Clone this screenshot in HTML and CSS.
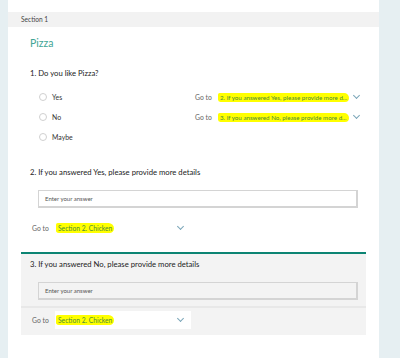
FILE: index.html
```html
<!DOCTYPE html>
<html lang="en">
<head>
  <meta charset="UTF-8">
  <title>Pizza</title>
  <link rel="stylesheet" href="styles.css">
</head>
<body>
  <div class="page">
    <div class="section-bar">Section 1</div>
    <div class="title">Pizza</div>

    <div class="question">1. Do you like Pizza?</div>
    <div class="options">
      <div class="option">
        <span class="radio"></span><span class="label">Yes</span>
        <span class="goto">Go to</span>
        <span class="mark long">2. If you answered Yes, please provide more d...</span>
        <span class="chev"></span>
      </div>
      <div class="option">
        <span class="radio"></span><span class="label">No</span>
        <span class="goto">Go to</span>
        <span class="mark long">3. If you answered No, please provide more d...</span>
        <span class="chev"></span>
      </div>
      <div class="option">
        <span class="radio"></span><span class="label">Maybe</span>
      </div>
    </div>

    <div class="question q2">2. If you answered Yes, please provide more details</div>
    <div class="answer">Enter your answer</div>
    <div class="goto-row">
      <span class="goto">Go to</span>
      <div class="dropdown">
        <span class="mark">Section 2. Chicken</span>
        <span class="chev"></span>
      </div>
    </div>

    <div class="card">
      <div class="question">3. If you answered No, please provide more details</div>
      <div class="answer">Enter your answer</div>
      <div class="card-foot">
        <span class="goto">Go to</span>
        <div class="dropdown white">
          <span class="mark">Section 2. Chicken</span>
          <span class="chev"></span>
        </div>
      </div>
    </div>
  </div>
</body>
</html>
```
FILE: styles.css
```css
body {
  margin: 0;
  background: #e6eff2;
  font-family: Lato, "Open Sans", sans-serif;
  color: #333;
}

.page {
  margin-left: 8px;
  width: 371px;
  height: 358px;
  background: #fff;
  overflow: hidden;
}

.section-bar {
  margin-top: 12px;
  height: 15px;
  line-height: 15px;
  background: #f2f2f2;
  padding-left: 13px;
  font-size: 6.6px;
  color: #444;
}

.title {
  margin-top: 6px;
  height: 20px;
  line-height: 20px;
  padding-left: 22px;
  font-size: 10.5px;
  color: #3fa595;
}

.question {
  margin-top: 10px;
  height: 20px;
  line-height: 20px;
  padding-left: 22px;
  font-size: 7.7px;
  color: #222;
}

.q2 {
  margin-top: 15px;
}

.options {
  margin-top: 4px;
}

.option {
  display: flex;
  align-items: center;
  height: 20px;
  padding-left: 31px;
  font-size: 6.9px;
}

.radio {
  width: 6px;
  height: 6px;
  border: 1px solid #d0d0d0;
  border-radius: 50%;
}

.label {
  margin-left: 5px;
  width: 143px;
  color: #333;
}

.goto {
  font-size: 6.8px;
  color: #666;
  width: 23px;
}

.mark {
  background: #ffff00;
  color: #4b8c3a;
  font-size: 6.7px;
  padding: 1px 2px;
  border-radius: 2px 6px 5px 3px;
  white-space: nowrap;
}

.long {
  font-size: 6.2px;
}

.chev {
  width: 4px;
  height: 4px;
  margin-left: 5px;
  margin-top: -3px;
  border-right: 1px solid #7aa6b8;
  border-bottom: 1px solid #7aa6b8;
  transform: rotate(45deg);
}

.answer {
  margin-top: 8px;
  margin-left: 30px;
  width: 311px;
  height: 15px;
  line-height: 15px;
  padding-left: 6px;
  border: 1px solid #d4d4d4;
  border-right-width: 2px;
  border-bottom-width: 2px;
  font-size: 6px;
  color: #555;
}

.goto-row {
  margin-top: 10px;
  height: 20px;
  display: flex;
  align-items: center;
  padding-left: 24px;
}

.dropdown {
  display: flex;
  align-items: center;
  width: 136px;
  height: 18px;
}

.dropdown .mark {
  margin-left: 1px;
}

.dropdown .chev {
  margin-left: auto;
  margin-right: 8px;
}

.card {
  margin-top: 14px;
  margin-left: 13px;
  width: 345px;
  height: 81px;
  background: #f3f3f3;
  border-top: 2px solid #0c8473;
}

.card .question {
  margin-top: 0;
  padding-left: 9px;
}

.card .answer {
  margin-left: 17px;
  background: #f3f3f3;
}

.card-foot {
  margin-top: 6px;
  border-top: 2px solid #e8e8e8;
  display: flex;
  align-items: center;
  padding-left: 11px;
  padding-top: 3px;
}

.white {
  background: #fff;
}
```
